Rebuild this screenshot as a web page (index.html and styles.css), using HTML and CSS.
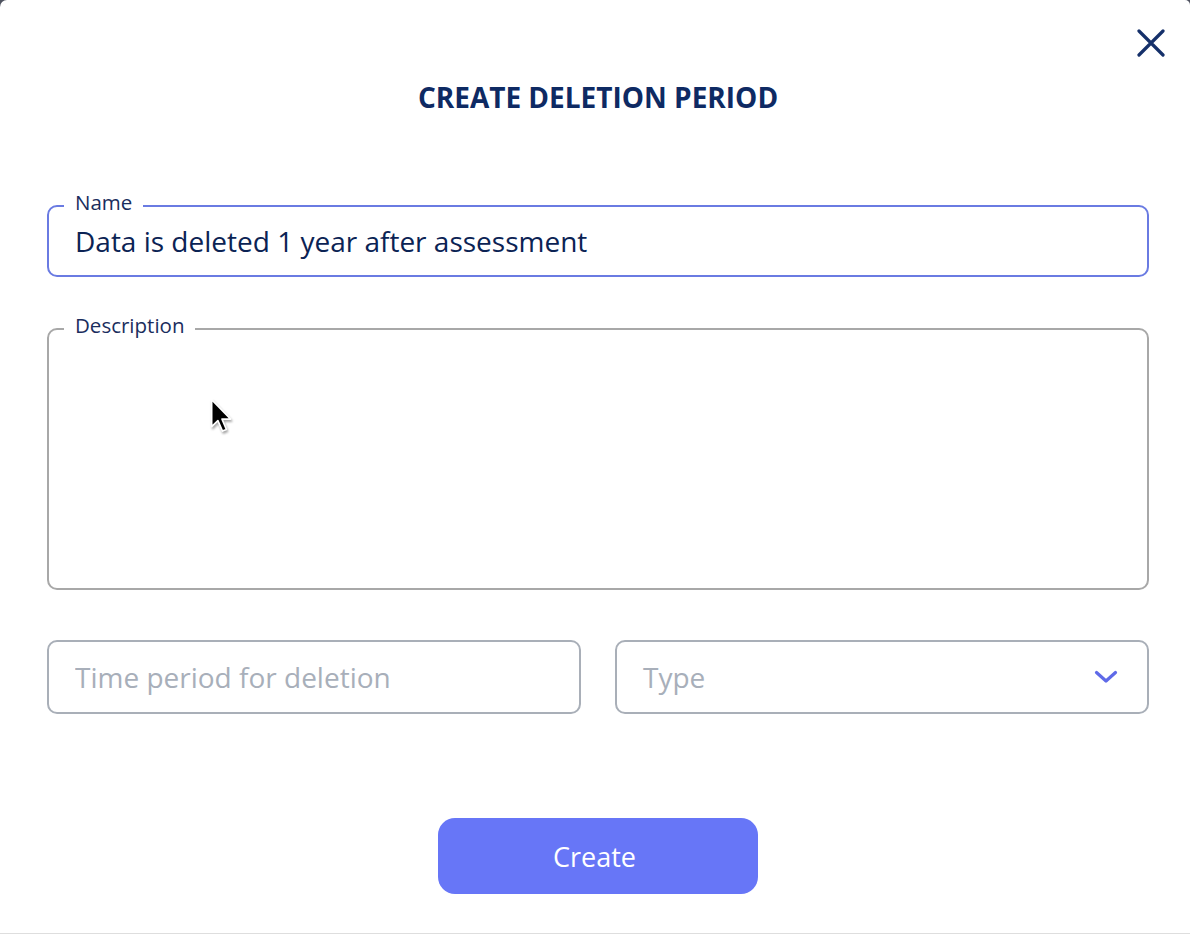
FILE: index.html
```html
<!DOCTYPE html>
<html lang="en">
<head>
<meta charset="utf-8">
<title>Create deletion period</title>
<link rel="stylesheet" href="styles.css">
</head>
<body>
<div class="dialog">
  <button class="close" type="button" aria-label="Close">
    <svg viewBox="0 0 28 28" width="28" height="28"><path d="M2 2 L26 26 M26 2 L2 26" fill="none" stroke="#15306a" stroke-width="3.2" stroke-linecap="round"/></svg>
  </button>
  <h1 class="title">CREATE DELETION PERIOD</h1>
  <form class="form">
    <div class="field field-active">
      <span class="label">Name</span>
      <input class="input" type="text" value="Data is deleted 1 year after assessment">
    </div>
    <div class="field field-area">
      <span class="label">Description</span>
      <textarea class="textarea"></textarea>
    </div>
    <div class="row">
      <div class="field field-small">
        <input class="input" type="text" placeholder="Time period for deletion">
      </div>
      <div class="field field-small field-select">
        <span class="placeholder">Type</span>
        <svg class="chevron" viewBox="0 0 24 14" width="24" height="14"><path d="M2.5 2.5 L12 11 L21.5 2.5" fill="none" stroke="#5f6ae8" stroke-width="3.2" stroke-linecap="round" stroke-linejoin="round"/></svg>
      </div>
    </div>
    <div class="actions">
      <button class="create" type="button">Create</button>
    </div>
  </form>
  <svg class="cursor" viewBox="0 0 14 22" width="23" height="36"><path d="M1 1 L1 17.5 L4.8 13.8 L7.6 20.2 L10 19.2 L7.3 12.9 L12.6 12.9 Z" fill="#000" stroke="#fff" stroke-width="1" stroke-linejoin="round"/></svg>
</div>
</body>
</html>
```

FILE: styles.css
```css
* { box-sizing: border-box; }

html, body {
  margin: 0;
  padding: 0;
}

body {
  background: #4f5360;
  font-family: "Open Sans", "Noto Sans", sans-serif;
  color: #0c2556;
  width: 1190px;
  height: 934px;
  overflow: hidden;
}

.dialog {
  position: relative;
  width: 1190px;
  height: 934px;
  background: #ffffff;
  border-radius: 7px 5px 0 0;
  border-bottom: 1px solid #dedede;
  padding: 79px 41px 0 47px;
}

.close {
  position: absolute;
  top: 29px;
  right: 25px;
  width: 28px;
  height: 28px;
  padding: 0;
  border: 0;
  background: transparent;
  display: block;
  cursor: pointer;
}

.close svg { display: block; }

.title {
  margin: 0;
  text-align: center;
  font-size: 28px;
  line-height: 36px;
  font-weight: 700;
  color: #0e2a63;
}

.form {
  margin-top: 90px;
  display: flex;
  flex-direction: column;
  gap: 51px;
}

.field {
  position: relative;
  height: 72px;
  border: 2px solid #a9afb8;
  border-radius: 10px;
  display: flex;
  align-items: center;
  padding: 0 26px;
  background: #fff;
}

.field-active {
  border-color: #6a7be2;
}

.field-area {
  height: 262px;
  border-color: #a8a8a8;
  align-items: stretch;
  padding: 18px 26px;
}

.label {
  position: absolute;
  top: -17px;
  left: 15px;
  padding: 0 11px;
  background: #fff;
  font-size: 20.5px;
  line-height: 24px;
  color: #1a2d5d;
}

.input {
  width: 100%;
  border: 0;
  outline: none;
  background: transparent;
  padding: 0;
  font-family: "Open Sans", "Noto Sans", sans-serif;
  font-size: 28px;
  line-height: 38px;
  color: #0b2354;
}

.input::placeholder {
  color: #a8afba;
  opacity: 1;
}

.textarea {
  width: 100%;
  border: 0;
  outline: none;
  resize: none;
  background: transparent;
  font-family: "Open Sans", "Noto Sans", sans-serif;
  font-size: 28px;
  color: #0b2354;
  padding: 0;
}

.row {
  display: grid;
  grid-template-columns: 1fr 1fr;
  gap: 34px;
  margin-top: -1px;
}

.field-small {
  height: 74px;
}

.field-select {
  justify-content: space-between;
  padding-right: 29px;
}

.placeholder {
  font-size: 28px;
  line-height: 38px;
  color: #a8afba;
}

.chevron { display: block; }

.actions {
  display: flex;
  justify-content: center;
  margin-top: 53px;
}

.create {
  width: 320px;
  height: 76px;
  border: 0;
  border-radius: 17px;
  background: #6776f7;
  color: #ffffff;
  font-family: "Open Sans", "Noto Sans", sans-serif;
  font-size: 27px;
  padding: 0 7px 0 0;
  cursor: pointer;
}

.cursor {
  position: absolute;
  left: 210px;
  top: 398px;
  pointer-events: none;
  filter: drop-shadow(1px 2px 1px rgba(0, 0, 0, 0.35));
}
```
